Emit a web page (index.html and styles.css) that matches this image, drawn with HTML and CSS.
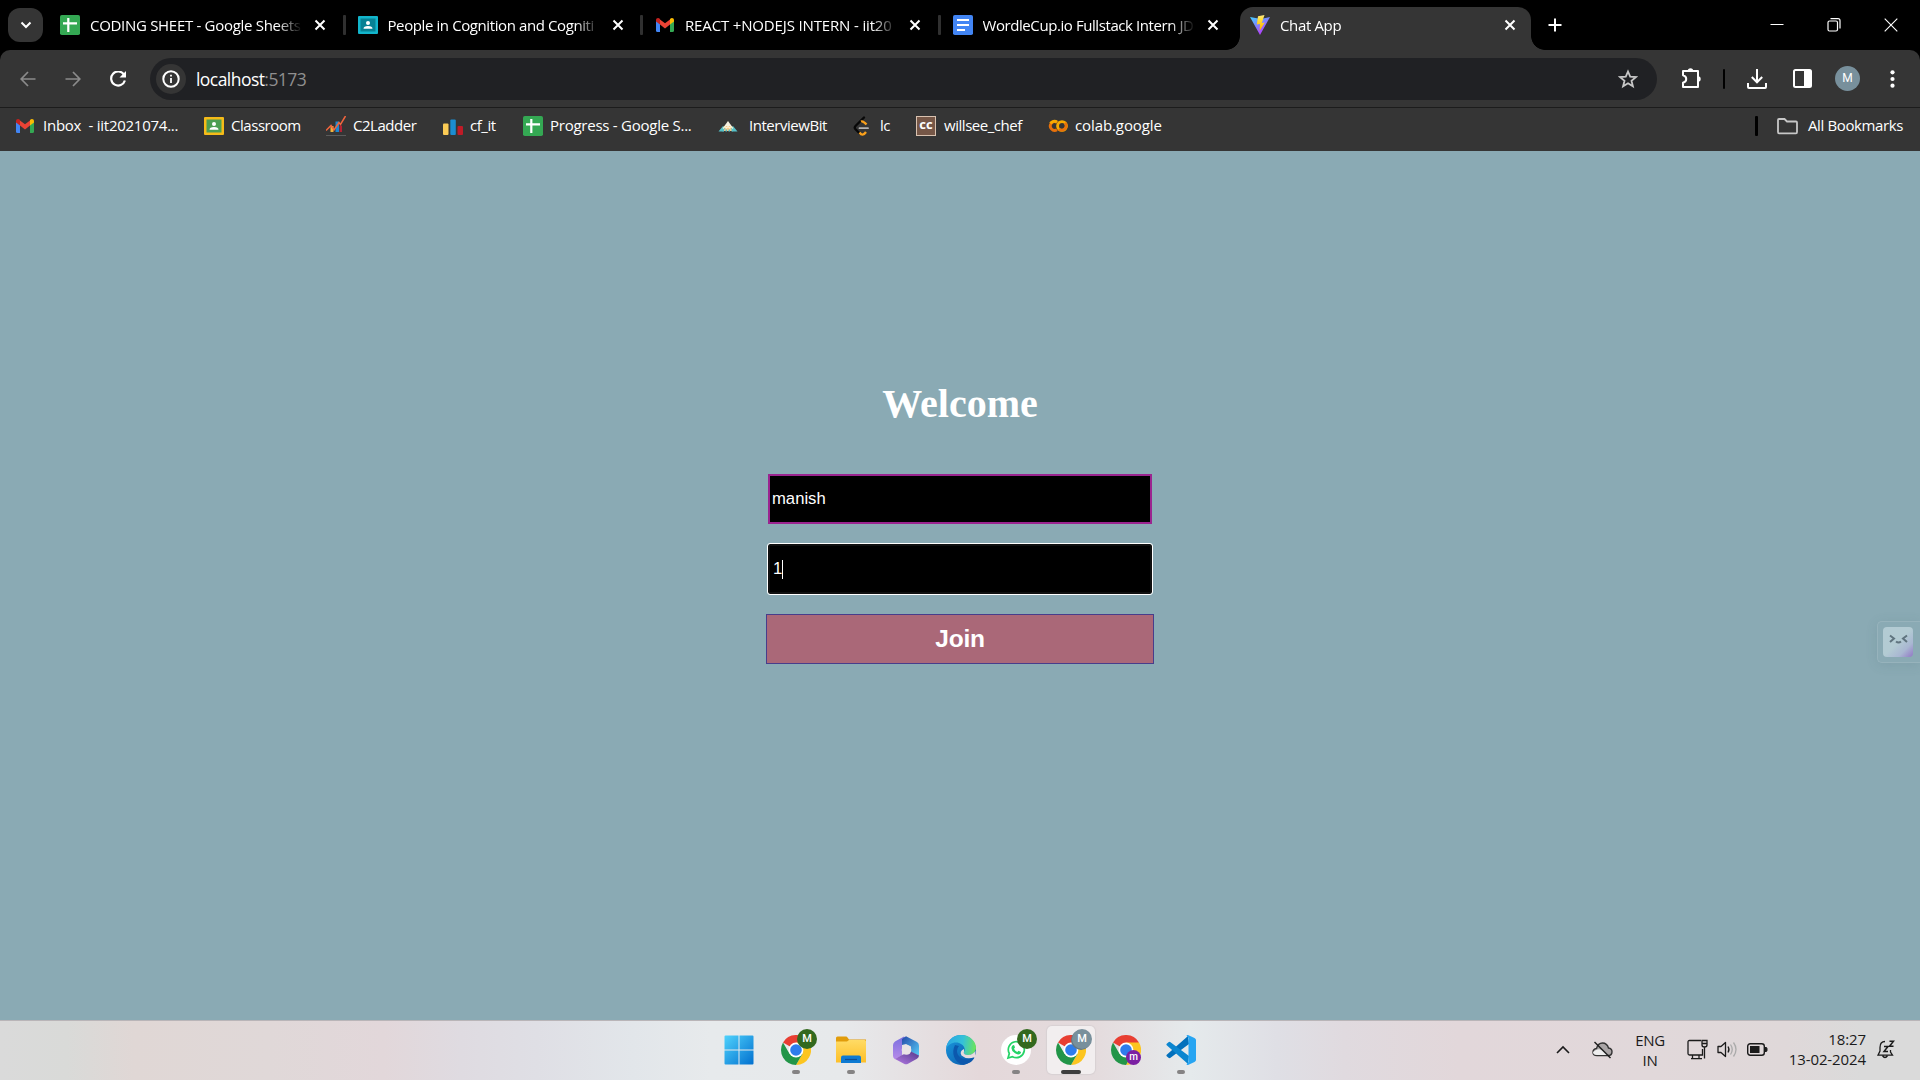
FILE: index.html
```html
<!DOCTYPE html>
<html lang="en">
<head>
<meta charset="utf-8">
<title>Chat App</title>
<link rel="stylesheet" href="styles.css">
</head>
<body>
<svg class="defs" width="0" height="0" aria-hidden="true">
  <defs>
    <linearGradient id="win" x1="0" y1="0" x2="1" y2="1"><stop offset="0" stop-color="#4fd2fc"/><stop offset="1" stop-color="#0270cf"/></linearGradient>
    <linearGradient id="fold" x1="0" y1="0" x2="0" y2="1"><stop offset="0" stop-color="#ffdb65"/><stop offset="1" stop-color="#fdbf28"/></linearGradient>
    <linearGradient id="vite" x1="0" y1="0" x2=".6" y2="1"><stop offset="0" stop-color="#41d1ff"/><stop offset="1" stop-color="#bd34fe"/></linearGradient>
    <linearGradient id="bolt" x1="0" y1="0" x2="0" y2="1"><stop offset="0" stop-color="#ffea83"/><stop offset=".3" stop-color="#ffdd35"/><stop offset="1" stop-color="#ffa800"/></linearGradient>
    <linearGradient id="edgeTop" x1="0" y1=".4" x2="1" y2=".5"><stop offset="0" stop-color="#2aa5e3"/><stop offset=".55" stop-color="#35c1d8"/><stop offset="1" stop-color="#6ce55a"/></linearGradient>
    <linearGradient id="edgeLow" x1="0" y1="0" x2="1" y2="1"><stop offset="0" stop-color="#1a9be0"/><stop offset="1" stop-color="#0b54a6"/></linearGradient>
    <linearGradient id="mA" x1="0" y1="0" x2="0" y2="1"><stop offset="0" stop-color="#7a6fe0"/><stop offset="1" stop-color="#b68ae8"/></linearGradient>
    <linearGradient id="mB" x1="0" y1="0" x2="1" y2="1"><stop offset="0" stop-color="#2449a8"/><stop offset="1" stop-color="#58cdf8"/></linearGradient>
    <linearGradient id="mC" x1="0" y1="1" x2="1" y2="0"><stop offset="0" stop-color="#b47ae4"/><stop offset="1" stop-color="#54398c"/></linearGradient>
    <symbol id="x" viewBox="0 0 12 12"><path d="M1.500 1.500l9 9m0-9l-9 9" stroke="#fff" stroke-width="2" fill="none"/></symbol>
    <symbol id="sheet" viewBox="0 0 20 20"><rect width="20" height="20" rx="1.800" fill="#34a853"/><path d="M8.300 3v14M3 8.300h14" stroke="#fff" stroke-width="2.200"/></symbol>
    <symbol id="gmail" viewBox="0 0 18 14"><path d="M0 2.500V12.500Q0 14 1.400 14H4V5.400z" fill="#4285f4"/><path d="M18 2.500V12.500Q18 14 16.600 14H14V5.400z" fill="#34a853"/><path d="M4 1.400L9 5.200l5-3.800v5.200l-5 3.900-5-3.900z" fill="#ea4335"/><path d="M0 2.200C0 .1 2.200-.7 4 .9v5.700L0 3.600z" fill="#c5221f"/><path d="M18 2.200C18 .1 15.800-.7 14 .9v5.700l4-3z" fill="#fbbc04"/></symbol>
    <symbol id="person" viewBox="0 0 20 18"><circle cx="10" cy="7" r="2" fill="#fff"/><path d="M5.500 12.800q0-2.800 4.500-2.800t4.500 2.800z" fill="#fff"/></symbol>
    <symbol id="chrome" viewBox="0 0 30 30"><path d="M15 15L2.010 7.500A15 15 0 0 1 28 7.500z" fill="#e83e32"/><path d="M15 7.500H28A15 15 0 0 1 15 30l6.500-11.200z" fill="#fcc520"/><path d="M21.500 18.700L15 30A15 15 0 0 1 2.010 7.500L8.500 18.700z" fill="#229548"/><circle cx="15" cy="15" r="7.400" fill="#fff"/><circle cx="15" cy="15" r="5.800" fill="#2e7cec"/></symbol>
  </defs>
</svg>

<header class="browser">
  <div class="tabstrip">
    <div class="tab-search"><svg width="12" height="8" viewBox="0 0 12 8"><path d="M1.500 1.500L6 6l4.500-4.500" fill="none" stroke="#fff" stroke-width="2"/></svg></div>
    <div class="tab"><svg class="fav" viewBox="0 0 20 20"><use href="#sheet"/></svg><span class="tab-title t1">CODING SHEET - Google Sheets</span><svg class="close"><use href="#x"/></svg></div>
    <div class="tab"><svg class="fav" viewBox="0 0 20 20"><rect y="1" width="20" height="18" rx="1" fill="#12b5cb"/><rect x="2.500" y="3.500" width="15" height="13" fill="#078193"/><use href="#person" y="1" width="20" height="18"/></svg><span class="tab-title t2">People in Cognition and Cogniti</span><svg class="close"><use href="#x"/></svg></div>
    <div class="tab"><svg class="fav" viewBox="0 0 20 20"><use href="#gmail" x="1" y="3" width="18" height="14"/></svg><span class="tab-title t3">REACT +NODEJS INTERN - iit20</span><svg class="close"><use href="#x"/></svg></div>
    <div class="tab last"><svg class="fav" viewBox="0 0 20 20"><rect width="20" height="20" rx="1.800" fill="#4285f4"/><path d="M4 5h12M4 10h12M4 15h8" stroke="#fff" stroke-width="2.200"/></svg><span class="tab-title t4">WordleCup.io Fullstack Intern JD</span><svg class="close"><use href="#x"/></svg></div>
    <div class="tab active"><svg class="fav" viewBox="0 0 20 20"><path d="M0 2l10 18L20 2l-9 2z" fill="url(#vite)"/><path d="M14.500 0L8 1.200 6.800 9.500l3.200-.6L9.600 16l5.200-8.600-3 .5z" fill="url(#bolt)"/></svg><span class="tab-title t5">Chat App</span><svg class="close"><use href="#x"/></svg></div>
    <svg class="plus" width="14" height="14" viewBox="0 0 14 14"><path d="M7 .5v13M.5 7h13" stroke="#fff" stroke-width="2"/></svg>
    <div class="window-controls">
      <svg width="14" height="14" viewBox="0 0 14 14"><path d="M.5 6.500h13" stroke="#fff"/></svg>
      <svg width="14" height="14" viewBox="0 0 14 14"><rect x="1" y="3" width="9.500" height="10" rx="1.500" fill="none" stroke="#fff" stroke-width="1.200"/><path d="M3.500 .7H11q2 0 2 2v7.800" fill="none" stroke="#fff" stroke-width="1.200"/></svg>
      <svg width="14" height="14" viewBox="0 0 14 14"><path d="M.7.700l12.600 12.600m0-12.600L.7 13.300" stroke="#fff" stroke-width="1.100"/></svg>
    </div>
  </div>

  <div class="toolbar">
    <svg class="nav-icon" viewBox="0 0 16 16"><path d="M15.500 8H1.500M8 1L1.200 8 8 15" fill="none" stroke="#8b8b8b" stroke-width="1.700"/></svg>
    <svg class="nav-icon" viewBox="0 0 16 16"><path d="M.5 8h14M8 1l6.800 7L8 15" fill="none" stroke="#8b8b8b" stroke-width="1.700"/></svg>
    <svg class="nav-icon" viewBox="0 0 16 16"><path d="M14 3.600A7 7 0 1 0 14.900 9.500" fill="none" stroke="#fff" stroke-width="2.200"/><path d="M9.500 6.500H16V0z" fill="#fff"/></svg>
    <div class="omnibox">
      <div class="site-info"><svg width="18" height="18" viewBox="0 0 18 18"><circle cx="9" cy="9" r="7.700" fill="none" stroke="#fff" stroke-width="2"/><path d="M9 8v5M9 4.700v1.800" stroke="#fff" stroke-width="1.800"/></svg></div>
      <span class="url">localhost<span class="port">:5173</span></span>
      <svg class="star" width="20" height="20" viewBox="0 0 20 20"><path d="M10 2.500l2.200 5.200 5.600.4-4.300 3.700 1.400 5.500-4.900-3-4.900 3 1.400-5.500L2.200 8.100l5.600-.4z" fill="none" stroke="#c7c7c7" stroke-width="1.800"/></svg>
    </div>
    <svg class="ext" width="21" height="21" viewBox="0 0 21 21"><path d="M2 3H17V19H2V14.800C6.300 13.500 6.300 8.500 2 7.300z" fill="none" stroke="#fff" stroke-width="2" stroke-linejoin="round"/><path d="M6.800 3a2.700 2.700 0 0 1 5.400 0M17 8.300a2.700 2.700 0 0 1 0 5.400" fill="#fff"/></svg>
    <i class="divider"></i>
    <svg class="download" width="20" height="20" viewBox="0 0 20 20"><path d="M10 0v13M4.800 8l5.200 5.300L15.200 8M1 14v4q0 1 1 1h16q1 0 1-1v-4" fill="none" stroke="#fff" stroke-width="2"/></svg>
    <svg class="panel" width="19" height="19" viewBox="0 0 19 19"><rect x="1" y="1" width="17" height="17" rx="1.500" fill="none" stroke="#fff" stroke-width="2"/><path d="M11 1h7v17h-7z" fill="#fff"/></svg>
    <span class="avatar">M</span>
    <svg class="more" width="5" height="18" viewBox="0 0 5 18"><g fill="#fff"><circle cx="2.500" cy="2.300" r="2.100"/><circle cx="2.500" cy="9" r="2.100"/><circle cx="2.500" cy="15.700" r="2.100"/></g></svg>
  </div>

  <nav class="bookmarks">
    <a class="bm b1"><svg class="small" viewBox="0 0 18 14"><use href="#gmail"/></svg><span>Inbox &nbsp;- iit2021074...</span></a>
    <a class="bm b2"><svg viewBox="0 0 20 20"><rect y="1" width="20" height="18" rx="1" fill="#f6bb18"/><rect x="2.500" y="3.500" width="15" height="13" fill="#4c9e52"/><use href="#person" y="1" width="20" height="18"/></svg><span>Classroom</span></a>
    <a class="bm b3"><svg viewBox="0 0 20 20"><path d="M4.500 10h3v6h-3z" fill="#f2b53c"/><path d="M9.500 5.500h3.500V16H9.500z" fill="#1c88cf"/><path d="M13.500 9.500H16V16h-2.500z" fill="#b52134"/><path d="M0 14.500l5-5 3 4.500 5-7.500 1.500 2L19.500 0" fill="none" stroke="#f1653d" stroke-width="1.500"/><path d="M0 19.500h20" stroke="#5b5b5b"/></svg><span>C2Ladder</span></a>
    <a class="bm b4"><svg viewBox="0 0 20 20"><rect y="7.500" width="5.500" height="11.500" rx="1" fill="#fbcb55"/><rect x="7.300" y="3.500" width="5.500" height="15.500" rx="1" fill="#1b8dd1"/><rect x="14.500" y="10" width="5.500" height="9" rx="1" fill="#c01b27"/></svg><span>cf_it</span></a>
    <a class="bm b5"><svg viewBox="0 0 20 20"><use href="#sheet"/></svg><span>Progress - Google S...</span></a>
    <a class="bm b6"><svg viewBox="0 0 20 20"><path d="M6 10.500L10 5l4 5.500z" fill="#f5f1e0"/><path d="M6 10h8l3.500 5h-15z" fill="#f4c98a"/><path d="M.5 15.500L5 10l2 2-1.500 3.500zM19.500 15.500L15 10l-2 2 1.500 3.500z" fill="#55c0c8"/><path d="M4.500 14.500h11" stroke="#55c0c8" stroke-width="1.800" stroke-dasharray="1.500 1.500"/><path d="M5 12.500l2-2 1.500 1.500 1.500-1.500 1.500 1.500 1.500-1.500 2 2" fill="none" stroke="#fff2d6" stroke-width="1.200"/></svg><span>InterviewBit</span></a>
    <a class="bm b7"><svg viewBox="0 0 20 20"><path d="M11 1.500L2.500 10q-1.500 1.500 0 3.200l4 4" fill="none" stroke="#080808" stroke-width="2.300" stroke-linecap="round"/><path d="M8 5.500q2-1 5.500 3M6.500 16.500q3 4.500 6.500-.5" fill="none" stroke="#f9a01b" stroke-width="2.300"/><path d="M6.500 12.200h8.500" stroke="#b3b3b3" stroke-width="1.800" stroke-linecap="round"/></svg><span>lc</span></a>
    <a class="bm b8"><i class="chef">cc</i><span>willsee_chef</span></a>
    <a class="bm b9"><svg viewBox="0 0 20 20"><path d="M9 6.200A4.400 4.400 0 1 0 9 13.800" fill="none" stroke="#e8710a" stroke-width="2.900"/><path d="M9 6.200A4.400 4.400 0 0 0 2.500 7.500" fill="none" stroke="#f9ab00" stroke-width="2.900"/><circle cx="14" cy="10" r="4.400" fill="none" stroke="#f9ab00" stroke-width="2.900"/><path d="M10.900 13.100a4.400 4.400 0 0 0 6.200-6.200" fill="none" stroke="#e8710a" stroke-width="2.900"/></svg><span>colab.google</span></a>
    <i class="divider"></i>
    <a class="bm all"><svg viewBox="0 0 21 17"><path d="M1 2q0-1 1-1h5.500l2.500 2.500h9q1 0 1 1V14q0 1.300-1 1.300H2Q1 15.300 1 14z" fill="none" stroke="#c7c7c7" stroke-width="1.800"/></svg><span>All Bookmarks</span></a>
  </nav>
</header>

<main class="page">
  <form class="join">
    <h1>Welcome</h1>
    <div class="field">manish</div>
    <div class="field focused">1<i class="caret"></i></div>
    <button class="join-btn" type="button">Join</button>
  </form>
  <aside class="helper"><svg width="30" height="30" viewBox="0 0 30 30"><g fill="none" stroke="#60747f" stroke-width="2"><path d="M7 8.500l4 3-4 3.500M24 8.500l-4 3 4 3.500"/><path d="M13 14.500q2.500 2 5 0"/></g></svg></aside>
</main>

<footer class="taskbar">
  <div class="apps">
    <div class="app start"><svg width="30" height="30" viewBox="0 0 30 30"><path d="M1.500.5H14.500V14.500H.5v-13q0-1 1-1zM15.500.5h13q1 0 1 1v13h-14zM.5 15.500h14v14h-13q-1 0-1-1zM15.500 15.500h14v13q0 1-1 1h-13z" fill="url(#win)"/></svg></div>
    <div class="app run"><svg width="30" height="30"><use href="#chrome"/></svg><b class="badge green">M</b></div>
    <div class="app run"><svg width="30" height="30" viewBox="0 0 30 30"><path d="M0 3q0-1.500 1.500-1.500H10q1 0 1.500 1L13 4.500H30V9H0z" fill="#e19c0b"/><path d="M0 6.500h11l2-1.500h15.500q1.500 0 1.500 1.500v21H0z" fill="url(#fold)"/><path d="M5 28v-5.500q0-2 2-2h16q2 0 2 2V28z" fill="#0e7ad2"/><path d="M9 24.500h12" stroke="#0d4e95" stroke-width="1.200"/></svg></div>
    <div class="app"><svg width="30" height="30" viewBox="0 0 30 30"><path d="M13 1.500L4 6.500Q2 8 2 10v11q0 2 2 3.200l7-4V10.500q0-2 5-5z" fill="url(#mA)"/><path d="M11 10V4L15 1.300l11 5.800q2 1.300 2 3.700v10l-8-4V11.500L15 9z" fill="url(#mB)"/><path d="M4 24l7-4 9-3.500 8 4q0 2-2 3.300l-9 5q-2 1-4 0z" fill="url(#mC)"/><circle cx="15.500" cy="15" r="4.800" fill="#eae3e5"/></svg></div>
    <div class="app"><svg width="30" height="30" viewBox="0 0 30 30"><circle cx="15" cy="15" r="15" fill="url(#edgeLow)"/><path d="M0 14C1 5 7.500 0 15 0c9 0 15 6.500 15 12.500 0 5-4 7.500-8 7.500-3 0-5-1-4-3 1.500-2 1-7-5-9C8 6.500 2 9 0 14z" fill="url(#edgeTop)"/><path d="M9 10C5 18 8 27 17 29.900 23 29 27 26 28.500 22.500 20 27 11 23 11 16q0-3 2-5z" fill="#0c58ad"/><path d="M18 14q-5 2-2.500 6.500 5 4.500 13.500 1.500l.5-6q-4 5-9.500 3.700-3-1-2-2.700z" fill="#e7dbdd"/></svg></div>
    <div class="app run"><svg width="30" height="30" viewBox="0 0 30 30"><circle cx="15" cy="15" r="15" fill="#fff"/><path d="M7 23l1.300-4.500A8 8 0 1 1 11.500 21.700z" fill="none" stroke="#25d366" stroke-width="1.700"/><path d="M11.500 10.500q1.500-1 2 .5l.5 1.500-1 1.200q1 2.200 3.300 3.300l1.200-1.200 2 1q1 .5 0 1.700-2 2-5.500-.2-4-2.800-3.500-5.800.1-1.200 1-2z" fill="#25d366"/></svg><b class="badge green">M</b></div>
    <div class="app current"><svg width="30" height="30"><use href="#chrome"/></svg><b class="badge slate under"></b><b class="badge slate">M</b></div>
    <div class="app"><svg width="30" height="30"><use href="#chrome"/></svg><b class="badge purple">m</b></div>
    <div class="app run"><svg width="30" height="30" viewBox="0 0 30 30"><path d="M22 1L1 19.500q-1.200 1 0 2l1.500 1.300q1 .7 2 0L23 9z" fill="#0270bc"/><path d="M22 29L1 10.500q-1.200-1 0-2l1.500-1.300q1-.7 2 0L23 21z" fill="#0b86d0"/><path d="M22 0l6.500 3Q30 3.800 30 5v20q0 1.200-1.500 2L22 30q-1 .2-1.500-.8L22.500 27V3L20.500.8Q21-.2 22 0z" fill="#27a5f2"/></svg></div>
  </div>
  <div class="tray">
    <svg class="chev" width="14" height="9" viewBox="0 0 14 9"><path d="M1 8l6-6 6 6" fill="none" stroke="#1b1b1b" stroke-width="1.600"/></svg>
    <svg class="cloud" width="21" height="18" viewBox="0 0 21 18"><path d="M5 14.500Q1 14.500 1 11.200 1 8 4.500 7.500 6 2 10.500 2q4.500 0 6 5 3.500.5 3.500 3.700 0 3.800-4 3.800z" fill="#aaa5a6" stroke="#333" stroke-width="1.400"/><path d="M4 9q4-2 7 1l5 4H5q-4 0-4-3z" fill="#eee"/><path d="M2.500 1l16 16" stroke="#1b1b1b" stroke-width="1.500"/></svg>
    <div class="lang">ENG<br>IN</div>
    <svg class="net" width="21" height="21" viewBox="0 0 21 21"><path d="M14 1.500H2.500q-1.500 0-1.500 1.500v11.500q0 1.500 1.500 1.500H15.500V10M5.500 16v3.500M12 16v3.500M4 19.700h11M15 1.500h5v4.500q0 2-2.500 2T15 6zM15 4.500h5M17.500 8v11.500" fill="none" stroke="#1b1b1b" stroke-width="1.300"/></svg>
    <svg class="vol" width="21" height="17" viewBox="0 0 21 17"><path d="M1 5.500h3l4.500-4v14L4 11.500H1z" fill="none" stroke="#1b1b1b" stroke-width="1.300" stroke-linejoin="round"/><path d="M11 5.500q2 3 0 6" fill="none" stroke="#1b1b1b" stroke-width="1.300"/><path d="M13.500 3.500q3.500 5 0 10M16.500 1.500q5 7 0 14" fill="none" stroke="#aaa" stroke-width="1.300"/></svg>
    <svg class="bat" width="21" height="13" viewBox="0 0 21 13"><rect x=".7" y=".7" width="16.600" height="11.600" rx="2.500" fill="none" stroke="#1b1b1b" stroke-width="1.400"/><rect x="3" y="3" width="9.500" height="7" fill="#1b1b1b"/><path d="M18 4.500h1q1 0 1 1v2q0 1-1 1h-1z" fill="#1b1b1b" stroke="#1b1b1b"/></svg>
    <div class="clock">18:27<br>13-02-2024</div>
    <svg class="bell" width="18" height="19" viewBox="0 0 18 19"><path d="M8 1.500C4 1.500 3 4.500 3 7.500V11L1 15.200h14.500L13.500 12V10" fill="none" stroke="#1b1b1b" stroke-width="1.300"/><path d="M5.500 15.500q2.500 4 5 0M7 6.500h4l-4 5h4M12.500 1.200h4l-4 5h4" fill="none" stroke="#1b1b1b" stroke-width="1.500"/></svg>
  </div>
</footer>
</body>
</html>
```

FILE: styles.css
```css
* { box-sizing: border-box; }

body {
  margin: 0;
  width: 1920px;
  height: 1080px;
  overflow: hidden;
  display: flex;
  flex-direction: column;
  font-family: "Open Sans", "Noto Sans", sans-serif;
  font-size: 15px;
  color: #fff;
}

svg { display: block; flex: none; }
.defs { position: absolute; }

/* browser chrome */
.browser { height: 151px; background: linear-gradient(#000 62px, #353535 62px); }

.tabstrip {
  height: 50px;
  background: #000;
  display: flex;
  align-items: center;
  padding-left: 8px;
}
.tab-search {
  width: 35px;
  height: 34px;
  margin-right: 5px;
  border-radius: 12px;
  background: #353535;
  display: grid;
  place-items: center;
}
.tab {
  position: relative;
  width: 297.5px;
  height: 42px;
  display: flex;
  align-items: center;
  padding-left: 12px;
  flex: none;
}
.tab:not(.last):not(.active)::after {
  content: "";
  position: absolute;
  right: 0;
  top: 11px;
  width: 3px;
  height: 20px;
  background: #303030;
  border-radius: 1px;
}
.fav { width: 20px; height: 20px; }
.tab-title {
  width: 212px;
  margin-left: 10px;
  overflow: hidden;
  white-space: nowrap;
  line-height: 22px;
  padding-bottom: 1px;
  -webkit-mask-image: linear-gradient(90deg, #000 187px, transparent 212px);
  mask-image: linear-gradient(90deg, #000 187px, transparent 212px);
}
.close { width: 12px; height: 12px; margin-left: 12px; }
.tab.active {
  width: 291px;
  height: 43px;
  align-self: flex-end;
  margin-left: 2px;
  padding: 0 0 7px 10px;
  background: #353535;
  border-radius: 13px 13px 0 0;
}
.tab.active::before,
.tab.active::after {
  content: "";
  position: absolute;
  bottom: 0;
  width: 14px;
  height: 14px;
}
.tab.active::before { left: -14px; background: radial-gradient(circle at 0 0, transparent 13.5px, #353535 14.2px); }
.tab.active::after { right: -14px; background: radial-gradient(circle at 100% 0, transparent 13.5px, #353535 14.2px); }
.plus { margin-left: 17px; }
.window-controls { display: flex; gap: 43px; margin: 0 22px 0 auto; }

.t1 { letter-spacing: -0.3px; }
.t2 { letter-spacing: -0.4px; }
.t3 { letter-spacing: -0.15px; }
.t4 { letter-spacing: -0.42px; }
.t5 { letter-spacing: -0.35px; }

.toolbar {
  height: 58px;
  border-bottom: 1px solid #1c1c1c;
  border-radius: 10px 10px 0 0;
  background: #353535;
  display: flex;
  align-items: center;
  padding-left: 20px;
}
.nav-icon { width: 16px; height: 16px; margin-right: 29px; }
.omnibox {
  width: 1507px;
  height: 42px;
  margin-left: -5px;
  border-radius: 21px;
  background: #202124;
  display: flex;
  align-items: center;
  padding: 0 19px 0 6px;
}
.site-info {
  width: 30px;
  height: 30px;
  border-radius: 50%;
  background: #353535;
  display: grid;
  place-items: center;
}
.url { margin-left: 10px; font-size: 17.5px; letter-spacing: -0.55px; }
.port { color: #8f8f8f; }
.star { margin-left: auto; }
.ext { margin-left: 24px; }
.divider { width: 3px; height: 20px; background: #000; border-radius: 1px; flex: none; }
.toolbar .divider { width: 2px; margin-left: 21px; }
.download { margin-left: 22px; }
.panel { margin-left: 26px; }
.avatar {
  width: 25px;
  height: 25px;
  margin-left: 23px;
  border-radius: 50%;
  background: #78909c;
  font: 12px/25px Roboto, sans-serif;
  text-align: center;
}
.more { margin-left: 30px; }

.bookmarks {
  height: 43px;
  padding: 0 0 7px 16px;
  display: grid;
  grid-template-columns: 188px 122px 117px 80px 195px 135px 63px 132px 707px 22px 1fr;
  align-items: center;
}
.bm { display: flex; align-items: center; white-space: nowrap; height: 36px; }
.bm svg { width: 20px; height: 20px; margin-right: 7px; }
.bm svg.small { width: 18px; height: 14px; margin-right: 9px; }
.bm span { padding-bottom: 2px; letter-spacing: -0.46px; }
.b1 span, .b5 span { letter-spacing: -0.25px; }
.b9 span { letter-spacing: -0.1px; }
.b6 svg { margin-right: 11px; }
.b8 span { margin-left: 1px; }
.bm.all svg { width: 21px; height: 17px; margin-right: 10px; }
.bm.all span { letter-spacing: -0.38px; }
.chef {
  width: 20px;
  height: 20px;
  margin-right: 7px;
  background: #765747;
  border: 1px solid #d9c2b0;
  font: bold 13px/15px "Open Sans", sans-serif;
  text-align: center;
}

/* page */
.page {
  position: relative;
  height: 869px;
  background: #8aaab4;
  display: flex;
  justify-content: center;
}
.join { width: 388px; padding-top: 230px; display: flex; flex-direction: column; align-items: center; }
.join h1 {
  margin: 0 0 47px;
  font: bold 40px/46px "Liberation Serif", serif;
}
.field {
  width: 384px;
  height: 50px;
  margin-bottom: 20px;
  border: 2px solid #9b248f;
  background: #000;
  padding-left: 2px;
  font: 16.67px/44px "Liberation Sans", sans-serif;
  display: flex;
  align-items: center;
}
.field.focused {
  border-color: #101010;
  border-radius: 2px;
  outline: 1px solid #fff;
  padding-left: 3px;
}
.caret { width: 1px; height: 19px; background: #fff; }
.join-btn {
  width: 388px;
  height: 50px;
  border: 1px solid #483d8b;
  background: #aa6878;
  color: #fff;
  font: bold 24.5px/44px "Liberation Sans", sans-serif;
  letter-spacing: -0.2px;
  padding: 0;
}
.helper {
  position: absolute;
  right: 0;
  top: 470px;
  width: 43px;
  height: 42px;
  padding: 5px;
  border: 1px solid #97b3bc;
  border-right: 0;
  border-radius: 5px 0 0 5px;
  box-shadow: 0 2px 12px rgba(70, 100, 115, .15);
}
.helper svg { border-radius: 4px; background: linear-gradient(135deg, #b3cbd3 50%, #a9b7d2 75%, #9277c5); }

/* taskbar */
.taskbar {
  height: 60px;
  border-top: 1px solid #b9b5b8;
  background: linear-gradient(90deg, #dadada 0, #d9dad8 3.5%, #e0d7d5 7%, #e0d8d8 14%, #e2d7da 20%, #dfdbe1 24%, #dfdfe5 28%, #e2e6ea 33%, #e7eaec 37%, #e7e9eb 44%, #e4d8da 51%, #e4dbdd 57%, #e5eaec 62%, #dfdfe5 66.5%, #e0dadf 70%, #e2d7da 76%, #e1d8da 86%, #dfd8d9 93%, #dadada 97%);
  color: #1b1b1b;
  display: flex;
  padding-left: 715px;
}
.apps { display: flex; gap: 7px; padding-top: 5px; }
.app {
  position: relative;
  width: 48px;
  height: 48px;
  display: grid;
  place-items: center;
}
.start { margin-right: 2px; }
.run::after,
.current::after {
  content: "";
  position: absolute;
  left: 20px;
  bottom: 0;
  width: 8px;
  height: 4px;
  border-radius: 2px;
  background: #858384;
}
.current { background: #f2eeef; border-radius: 5px; box-shadow: 0 0 1px 1px #d8d1d3; }
.current::after { left: 14px; width: 20px; background: #3e3e3e; }
.badge {
  position: absolute;
  left: 25px;
  top: 3px;
  width: 20px;
  height: 20px;
  border-radius: 50%;
  font: 500 11px/20px Roboto, sans-serif;
  text-align: center;
  color: #fff;
}
.green { background: #33691e; }
.slate { background: #78909c; }
.under { transform: translate(-1px, 1px); background: #627682; }
.purple { left: 24px; top: 24px; width: 15px; height: 15px; line-height: 14px; font-size: 10px; background: #7b1fa2; }

.tray {
  display: flex;
  align-items: center;
  margin-left: auto;
  padding: 0 25px 2px 0;
  line-height: 20px;
  letter-spacing: -0.1px;
}
.cloud { margin-left: 22px; }
.lang { width: 40px; margin-left: 17px; text-align: center; letter-spacing: -0.3px; }
.net { margin-left: 17px; }
.vol { margin-left: 9px; }
.bat { margin-left: 9px; }
.clock { width: 88px; margin-left: 10px; padding-bottom: 1px; text-align: right; white-space: nowrap; }
.bell { margin-left: 11px; }
```
